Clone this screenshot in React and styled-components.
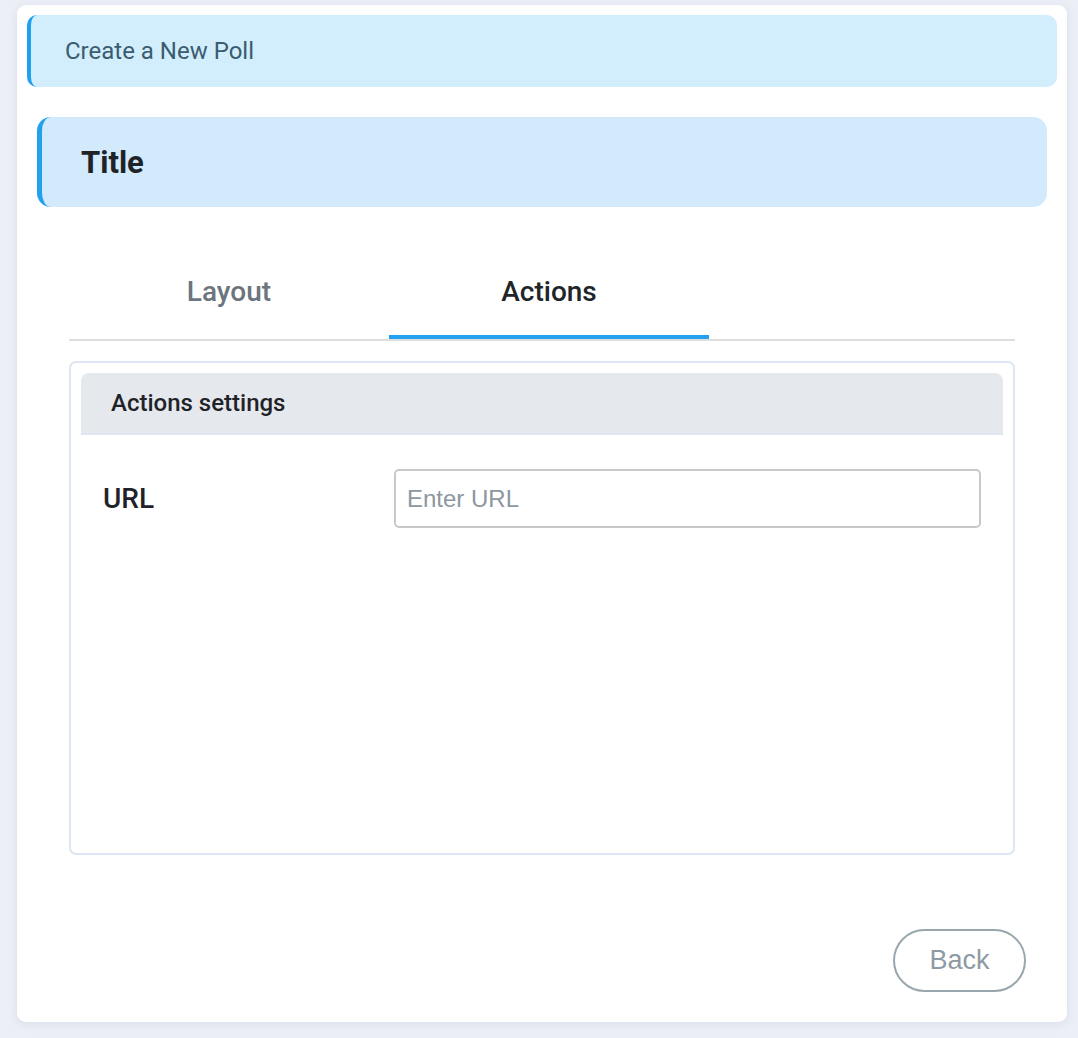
import styled, { createGlobalStyle } from 'styled-components';

const GlobalStyle = createGlobalStyle`
  html, body {
    margin: 0;
    padding: 0;
    background: #eceff6;
    font-family: Roboto, "Noto Sans", sans-serif;
  }
  * {
    box-sizing: border-box;
  }
`;

const tabs = ['Layout', 'Actions'];

const App = () => {
  return (
    <Page>
      <GlobalStyle />
      <Card>
        <Banner>Create a New Poll</Banner>
        <TitleBar>Title</TitleBar>
        <Section>
          <TabList>
            {tabs.map((t) => (
              <Tab key={t} $active={t === 'Actions'}>{t}</Tab>
            ))}
          </TabList>
          <SettingsBox>
            <SettingsHeader>Actions settings</SettingsHeader>
            <FieldRow>
              <FieldLabel>URL</FieldLabel>
              <TextInput placeholder="Enter URL" />
            </FieldRow>
          </SettingsBox>
        </Section>
        <Footer>
          <BackButton>Back</BackButton>
        </Footer>
      </Card>
    </Page>
  );
};

export default App;

const Page = styled.div`
  padding: 5px 11px 16px 17px;
  min-height: 1038px;
`;

const Card = styled.div`
  width: 1050px;
  height: 1017px;
  background: #fff;
  border-radius: 9px;
  box-shadow: 0 2px 10px rgba(160, 170, 200, 0.25);
  padding: 10px 10px 0;
`;

const Banner = styled.div`
  height: 72px;
  display: flex;
  align-items: center;
  padding-left: 34px;
  background: #d2eefc;
  border-left: 4px solid #1fa1f0;
  border-radius: 10px;
  color: #3a5c70;
  font-size: 24px;
`;

const TitleBar = styled.div`
  margin: 30px 10px 0;
  height: 90px;
  display: flex;
  align-items: center;
  padding-left: 39px;
  background: #d3eafd;
  border-left: 5px solid #1fa1f0;
  border-radius: 14px;
  color: #1f2328;
  font-size: 31px;
  font-weight: 700;
`;

const Section = styled.div`
  margin: 10px 10px 0;
  padding: 30px 32px 42px;
`;

const TabList = styled.div`
  display: flex;
  border-bottom: 2px solid #dedede;
`;

const Tab = styled.div`
  width: 320px;
  height: 92px;
  display: flex;
  align-items: center;
  justify-content: center;
  border-bottom: 4px solid ${(p) => (p.$active ? '#22a2f0' : 'transparent')};
  color: ${(p) => (p.$active ? '#212529' : '#6c757d')};
  font-size: 28px;
  font-weight: 500;
`;

const SettingsBox = styled.div`
  margin-top: 20px;
  height: 494px;
  border: 2px solid #dde6f2;
  border-radius: 7px;
  padding: 10px;
`;

const SettingsHeader = styled.div`
  height: 62px;
  display: flex;
  align-items: center;
  padding-left: 30px;
  background: #e5e9ed;
  border-bottom: 2px solid #dde6f2;
  border-radius: 8px 8px 0 0;
  color: #1f2328;
  font-size: 24px;
  font-weight: 500;
`;

const FieldRow = styled.div`
  display: flex;
  align-items: center;
  margin-top: 34px;
  padding: 0 22px;
`;

const FieldLabel = styled.div`
  width: 291px;
  color: #1f2328;
  font-size: 28px;
  font-weight: 500;
`;

const TextInput = styled.input`
  flex: 1;
  height: 59px;
  border: 2px solid #c8c8c8;
  border-radius: 5px;
  padding: 0 11px;
  font-family: "Liberation Sans", Arial, sans-serif;
  font-size: 24px;
  color: #333;
  outline: none;
  &::placeholder {
    color: #8d979f;
  }
`;

const Footer = styled.div`
  display: flex;
  justify-content: flex-end;
  padding: 32px 31px 0 0;
`;

const BackButton = styled.button`
  width: 133px;
  height: 63px;
  background: #fff;
  border: 2px solid #9aa6ae;
  border-radius: 32px;
  color: #8e9aa3;
  font-family: "Liberation Sans", Arial, sans-serif;
  font-size: 27px;
`;
